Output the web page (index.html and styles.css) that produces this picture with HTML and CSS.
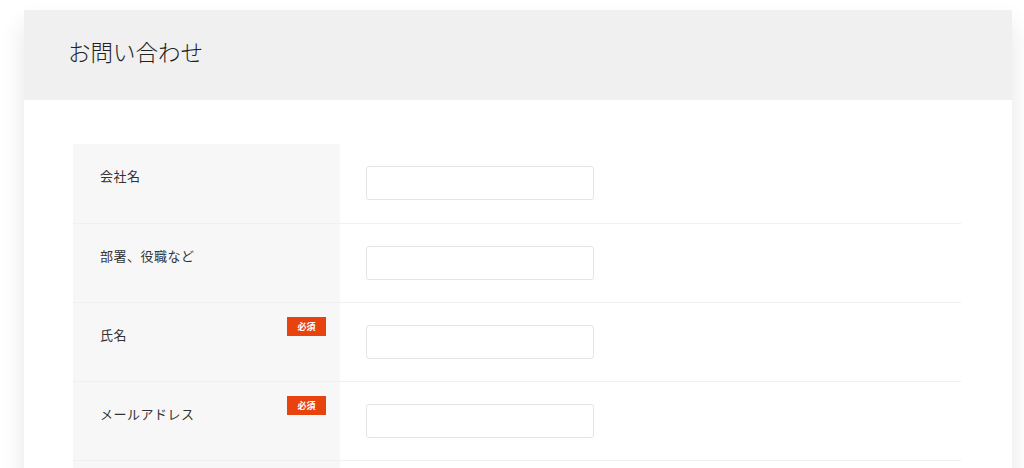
FILE: index.html
```html
<!DOCTYPE html>
<html lang="ja">
<head>
    <meta charset="UTF-8">
    <meta name="viewport" content="width=device-width, initial-scale=1.0">
    <title>お問い合わせ</title>
    <link rel="stylesheet" href="styles.css">
</head>
<body>
    <div class="page">
        <div class="card">
            <div class="card-header">
                <h1>お問い合わせ</h1>
            </div>
            <div class="card-body">
                <table class="form-table">
                    <tr>
                        <th><div class="label-cell"><span class="label">会社名</span></div></th>
                        <td><input type="text" class="field"></td>
                    </tr>
                    <tr>
                        <th><div class="label-cell"><span class="label">部署、役職など</span></div></th>
                        <td><input type="text" class="field"></td>
                    </tr>
                    <tr>
                        <th><div class="label-cell"><span class="label">氏名</span><span class="required">必須</span></div></th>
                        <td><input type="text" class="field"></td>
                    </tr>
                    <tr>
                        <th><div class="label-cell"><span class="label">メールアドレス</span><span class="required">必須</span></div></th>
                        <td><input type="email" class="field"></td>
                    </tr>
                    <tr>
                        <th><div class="label-cell"><span class="label">電話番号</span></div></th>
                        <td><input type="tel" class="field"></td>
                    </tr>
                </table>
            </div>
        </div>
    </div>
</body>
</html>
```

FILE: styles.css
```css
body {
    margin: 0;
    padding: 0;
    background: #fff;
    font-family: "Noto Sans CJK JP", "Noto Sans", sans-serif;
    color: #333;
    overflow: hidden;
}

.page {
    padding: 10px 12px 40px 24px;
}

.card {
    background: #fff;
    box-shadow: 0 14px 24px rgba(0, 0, 0, 0.1);
}

.card-header {
    background: #f0f0f0;
    height: 90px;
    padding: 0 44px;
    display: flex;
    align-items: center;
}

.card-header h1 {
    margin: 0 0 8px;
    font-size: 22.5px;
    font-weight: 300;
    color: #222;
}

.card-body {
    padding: 44px 51px 60px 49px;
}

.form-table {
    width: 100%;
    border-collapse: collapse;
}

.form-table tr {
    border-bottom: 1px solid #f0f0f0;
}

.form-table th {
    width: 267px;
    padding: 0;
    background: #f7f7f7;
    vertical-align: top;
    text-align: left;
    font-weight: normal;
}

.label-cell {
    display: flex;
    justify-content: space-between;
    align-items: flex-start;
    padding: 14px 14px 0 27px;
}

.label {
    margin-top: 8px;
    font-size: 13px;
    line-height: 20px;
    letter-spacing: 0.5px;
    color: #333;
}

.required {
    width: 39px;
    height: 19px;
    background: #e8420f;
    color: #fff;
    font-size: 9px;
    font-weight: bold;
    line-height: 19px;
    text-align: center;
}

.form-table td {
    padding: 22px 26px;
    vertical-align: top;
}

.form-table tr:first-child td {
    padding-top: 22px;
    padding-bottom: 23px;
}

.field {
    display: block;
    box-sizing: border-box;
    width: 228px;
    height: 34px;
    border: 1px solid #e4e4e4;
    border-radius: 3px;
    background: #fff;
    font-family: inherit;
    font-size: 13px;
    padding: 0 8px;
}
```
